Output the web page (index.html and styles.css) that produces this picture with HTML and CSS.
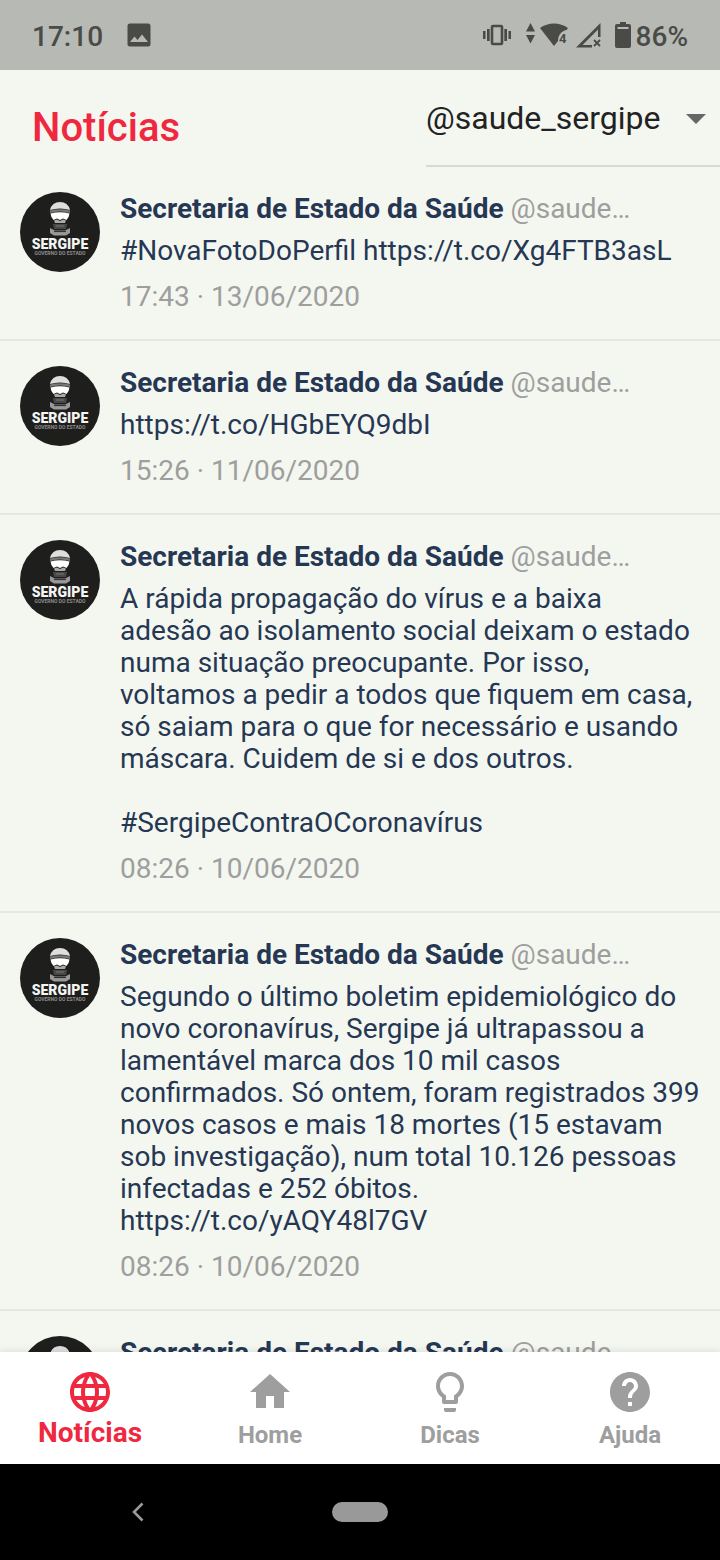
FILE: index.html
```html
<!DOCTYPE html>
<html lang="pt-BR">
<head>
<meta charset="utf-8">
<meta name="viewport" content="width=device-width, initial-scale=1">
<title>Notícias</title>
<link rel="stylesheet" href="styles.css">
</head>
<body>
<svg class="defs" aria-hidden="true">
  <symbol id="avatar" viewBox="0 0 80 80">
    <circle cx="40" cy="40" r="40" fill="#1e1e1c"/>
    <path d="M30 18 Q32 10 40 10 Q48 10 50 18 Q45 16.500 40 16.500 Q35 16.500 30 18Z" fill="#dedede"/>
    <path d="M30 18.500 Q40 16 50 18.500 V21 Q40 18 30 21Z" fill="#777"/>
    <path d="M30.500 21.500 Q40 19 49.500 21.500 Q49 26 46.500 28 L43 26.500 L40 28 L37 26.500 L33.500 28 Q31 26 30.500 21.500Z" fill="#fff"/>
    <path d="M34 28.500 L37 27.500 L40 29 L43 27.500 L46 28.500 L45 31 H35Z" fill="#aaa"/>
    <path d="M33 32 H47 L46 37 H34Z" fill="#484846"/>
    <path d="M36 34 H44" stroke="#777" stroke-width="1"/>
    <path d="M30 36 L35 38.500 H45 L50 36 V41 L46 43.500 H34 L30 41Z" fill="#999"/>
    <path d="M34 39.500 H46" stroke="#333" stroke-width="1.200"/>
    <text x="40" y="57" text-anchor="middle" class="avatar-name">SERGIPE</text>
    <text x="40" y="63" text-anchor="middle" class="avatar-sub">GOVERNO DO ESTADO</text>
  </symbol>
</svg>
<div class="screen">
  <div class="status">
    <span class="clock">17:10</span>
    <svg class="photo" width="24" height="24" viewBox="0 0 24 24"><path fill="currentColor" fill-rule="evenodd" d="M3 0.500H21Q23.500 .5 23.500 3V21Q23.500 23.500 21 23.500H3Q.5 23.500 .5 21V3Q.5 .5 3 .5ZM3 19H21L15 11.500L10.500 17L7.500 13.500Z"/></svg>
    <svg class="indicators" width="150" height="30" viewBox="0 0 150 30" fill="currentColor">
      <rect x="9" y="6" width="10" height="18" rx="1" fill="none" stroke="currentColor" stroke-width="2.600"/>
      <path d="M0 11h2.500v8H0zM4 9h2.700v12H4zM21.300 9H24v12h-2.700zM25.500 11h2.500v8h-2.500z"/>
      <path d="M47.500 3L52 11.500H43ZM43 15H52L47.500 23.500Z"/>
      <path d="M57 8C65 2 77 2 85 8L83.500 10C78 11 75 16 75 21L71 26Z"/>
      <text x="76" y="23" class="wifi-number">4</text>
      <path d="M93 27.500L117.500 3V17H115V9.500L99.500 25H109V27.500Z"/>
      <path d="M111 20L117 26M117 20L111 26" stroke="currentColor" stroke-width="1.800"/>
      <path fill-rule="evenodd" d="M137 2H143V4H146Q148 4 148 6V26Q148 28 146 28H134Q132 28 132 26V6Q132 4 134 4H137ZM134.500 7V9H145.500V7Z"/>
    </svg>
    <span class="clock">86%</span>
  </div>
  <header class="header">
    <h1 class="title">Notícias</h1>
    <div class="picker">
      <select class="account" aria-label="Perfil"><option>@saude_sergipe</option></select>
      <svg class="caret" width="20" height="10" viewBox="0 0 20 10"><path d="M0 0H20L10 10Z" fill="#666"/></svg>
    </div>
  </header>
  <main class="feed">
    <article class="post">
      <svg class="avatar" role="img" aria-label="Sergipe"><use href="#avatar"/></svg>
      <div class="content">
        <p class="author"><strong>Secretaria de Estado da Saúde</strong> <span class="handle">@saude…</span></p>
        <p class="body">#NovaFotoDoPerfil https://t.co/Xg4FTB3asL</p>
        <time class="date">17:43 · 13/06/2020</time>
      </div>
    </article>
    <article class="post">
      <svg class="avatar" role="img" aria-label="Sergipe"><use href="#avatar"/></svg>
      <div class="content">
        <p class="author"><strong>Secretaria de Estado da Saúde</strong> <span class="handle">@saude…</span></p>
        <p class="body">https://t.co/HGbEYQ9dbI</p>
        <time class="date">15:26 · 11/06/2020</time>
      </div>
    </article>
    <article class="post">
      <svg class="avatar" role="img" aria-label="Sergipe"><use href="#avatar"/></svg>
      <div class="content">
        <p class="author"><strong>Secretaria de Estado da Saúde</strong> <span class="handle">@saude…</span></p>
        <p class="body">A rápida propagação do vírus e a baixa adesão ao isolamento social deixam o estado numa situação preocupante. Por isso, voltamos a pedir a todos que fiquem em casa, só saiam para o que for necessário e usando máscara. Cuidem de si e dos outros.<br><br>#SergipeContraOCoronavírus</p>
        <time class="date">08:26 · 10/06/2020</time>
      </div>
    </article>
    <article class="post">
      <svg class="avatar" role="img" aria-label="Sergipe"><use href="#avatar"/></svg>
      <div class="content">
        <p class="author"><strong>Secretaria de Estado da Saúde</strong> <span class="handle">@saude…</span></p>
        <p class="body">Segundo o último boletim epidemiológico do novo coronavírus, Sergipe já ultrapassou a lamentável marca dos 10 mil casos confirmados. Só ontem, foram registrados 399 novos casos e mais 18 mortes (15 estavam sob investigação), num total 10.126 pessoas infectadas e 252 óbitos.<br>https://t.co/yAQY48l7GV</p>
        <time class="date">08:26 · 10/06/2020</time>
      </div>
    </article>
    <article class="post">
      <svg class="avatar" role="img" aria-label="Sergipe"><use href="#avatar"/></svg>
      <div class="content">
        <p class="author"><strong>Secretaria de Estado da Saúde</strong> <span class="handle">@saude…</span></p>
      </div>
    </article>
  </main>
  <nav class="tabs">
    <button class="tab active" type="button">
      <svg class="icon" viewBox="0 0 24 24"><path d="M11.990 2C6.470 2 2 6.480 2 12s4.470 10 9.990 10C17.520 22 22 17.520 22 12S17.520 2 11.990 2zm6.930 6h-2.950c-.32-1.250-.78-2.450-1.380-3.560 1.840.63 3.370 1.910 4.330 3.560zM12 4.040c.83 1.200 1.480 2.530 1.910 3.960h-3.820c.43-1.430 1.080-2.760 1.910-3.960zM4.260 14C4.100 13.360 4 12.690 4 12s.1-1.360.26-2h3.380c-.08.66-.14 1.320-.14 2s.06 1.340.14 2H4.260zm.82 2h2.950c.32 1.250.78 2.450 1.380 3.560-1.840-.63-3.370-1.900-4.330-3.560zm2.950-8H5.080c.96-1.660 2.490-2.930 4.330-3.560C8.810 5.550 8.350 6.750 8.030 8zM12 19.960c-.83-1.200-1.480-2.530-1.910-3.960h3.820c-.43 1.430-1.080 2.760-1.910 3.960zM14.340 14H9.660c-.09-.66-.16-1.320-.16-2s.07-1.350.16-2h4.680c.09.65.16 1.320.16 2s-.07 1.340-.16 2zm.25 5.560c.6-1.110 1.060-2.310 1.380-3.560h2.950c-.96 1.650-2.490 2.930-4.330 3.560zM16.360 14c.08-.66.14-1.320.14-2s-.06-1.340-.14-2h3.380c.16.64.26 1.310.26 2s-.1 1.360-.26 2h-3.380z"/></svg>
      Notícias
    </button>
    <button class="tab" type="button">
      <svg class="icon" viewBox="0 0 24 24"><path d="M10 20v-6h4v6h5v-8h3L12 3 2 12h3v8z"/></svg>
      Home
    </button>
    <button class="tab" type="button">
      <svg class="icon" viewBox="0 0 24 24"><path d="M9 21c0 .55.45 1 1 1h4c.55 0 1-.45 1-1v-1H9v1zm3-19C8.140 2 5 5.140 5 9c0 2.380 1.190 4.470 3 5.740V17c0 .55.45 1 1 1h6c.55 0 1-.45 1-1v-2.260c1.810-1.270 3-3.360 3-5.740 0-3.860-3.140-7-7-7zm2.850 11.100l-.85.6V16h-4v-2.300l-.85-.6C7.800 12.160 7 10.630 7 9c0-2.760 2.240-5 5-5s5 2.240 5 5c0 1.630-.8 3.160-2.150 4.100z"/></svg>
      Dicas
    </button>
    <button class="tab" type="button">
      <svg class="icon" viewBox="0 0 24 24"><path d="M12 2C6.480 2 2 6.480 2 12s4.480 10 10 10 10-4.480 10-10S17.520 2 12 2zm1 17h-2v-2h2v2zm2.070-7.750l-.9.920C13.450 12.900 13 13.500 13 15h-2v-.5c0-1.100.45-2.100 1.170-2.830l1.240-1.260c.37-.36.59-.86.59-1.410 0-1.100-.9-2-2-2s-2 .9-2 2H8c0-2.210 1.790-4 4-4s4 1.790 4 4c0 .88-.36 1.680-.93 2.250z"/></svg>
      Ajuda
    </button>
  </nav>
  <div class="system">
    <button class="back" type="button" aria-label="Voltar"><svg width="14" height="20" viewBox="0 0 14 20"><path d="M11.500 1.500L3 10L11.500 18.500" fill="none" stroke="#999" stroke-width="2.600"/></svg></button>
    <button class="pill" type="button" aria-label="Início"></button>
  </div>
</div>
</body>
</html>
```
FILE: styles.css
```css
* { box-sizing: border-box; }
body { margin: 0; font-family: Roboto, sans-serif; font-size: 28px; line-height: 32px; color: #263754; }
button, select { margin: 0; padding: 0; border: 0; background: none; font: inherit; color: inherit; }
.defs { position: absolute; width: 0; height: 0; }
.screen { display: flex; flex-direction: column; height: 100vh; background: #f4f7f0; }
.status { display: flex; align-items: center; flex: none; height: 70px; padding: 0 32px; background: #b7b9b4; color: #4a4b48; }
.clock { font-weight: 500; padding-top: 3px; }
.photo { margin-left: 24px; }
.indicators { margin-left: auto; margin-right: 3px; }
.wifi-number { font-size: 13px; font-weight: 700; }
.header { display: flex; justify-content: space-between; flex: none; padding-left: 32px; }
.title { margin: 0; padding-top: 34px; font-size: 40px; line-height: 48px; font-weight: 500; color: #f0283f; }
.picker { display: flex; align-items: center; position: relative; flex: 0 1 294px; border-bottom: 2px solid #d6d9d5; }
.account { width: 100%; height: 95px; appearance: none; font-size: 32px; line-height: 40px; color: #222; }
.caret { position: absolute; right: 14px; top: 44px; pointer-events: none; }
.feed { flex: 1; min-height: 0; overflow: hidden; }
.post { display: flex; gap: 20px; padding: 25px 20px 26px; border-bottom: 2px solid #e5e8e2; }
.avatar { flex: none; width: 80px; height: 80px; }
.avatar-name { font: 900 14px Roboto, sans-serif; fill: #f4f4f4; }
.avatar-sub { font: 700 5px Roboto, sans-serif; fill: #8c8c8c; }
.content { display: flex; flex-direction: column; flex: 1; min-width: 0; padding-top: 1px; }
.author, .body { margin: 0; }
.author { white-space: nowrap; }
.body { padding: 10px 0 14px; }
.handle, .date { color: #9e9e9e; }
.tabs { position: relative; display: grid; grid-template-columns: repeat(4, 1fr); flex: none; height: 112px; background: #fff; box-shadow: 0 0 8px rgba(0, 0, 0, .12); }
.tab { display: flex; flex-direction: column; align-items: center; padding-top: 16px; font-size: 24px; font-weight: 700; line-height: 38px; color: #9e9e9e; }
.active { font-size: 28px; line-height: 34px; color: #f0283f; }
.icon { width: 48px; height: 48px; fill: currentColor; }
.system { position: relative; display: grid; grid-template-columns: 1fr 56px 1fr; align-items: center; flex: none; height: 96px; background: #000; }
.back { display: flex; padding-left: 131px; }
.pill { height: 20px; border-radius: 10px; background: #999; }
```
